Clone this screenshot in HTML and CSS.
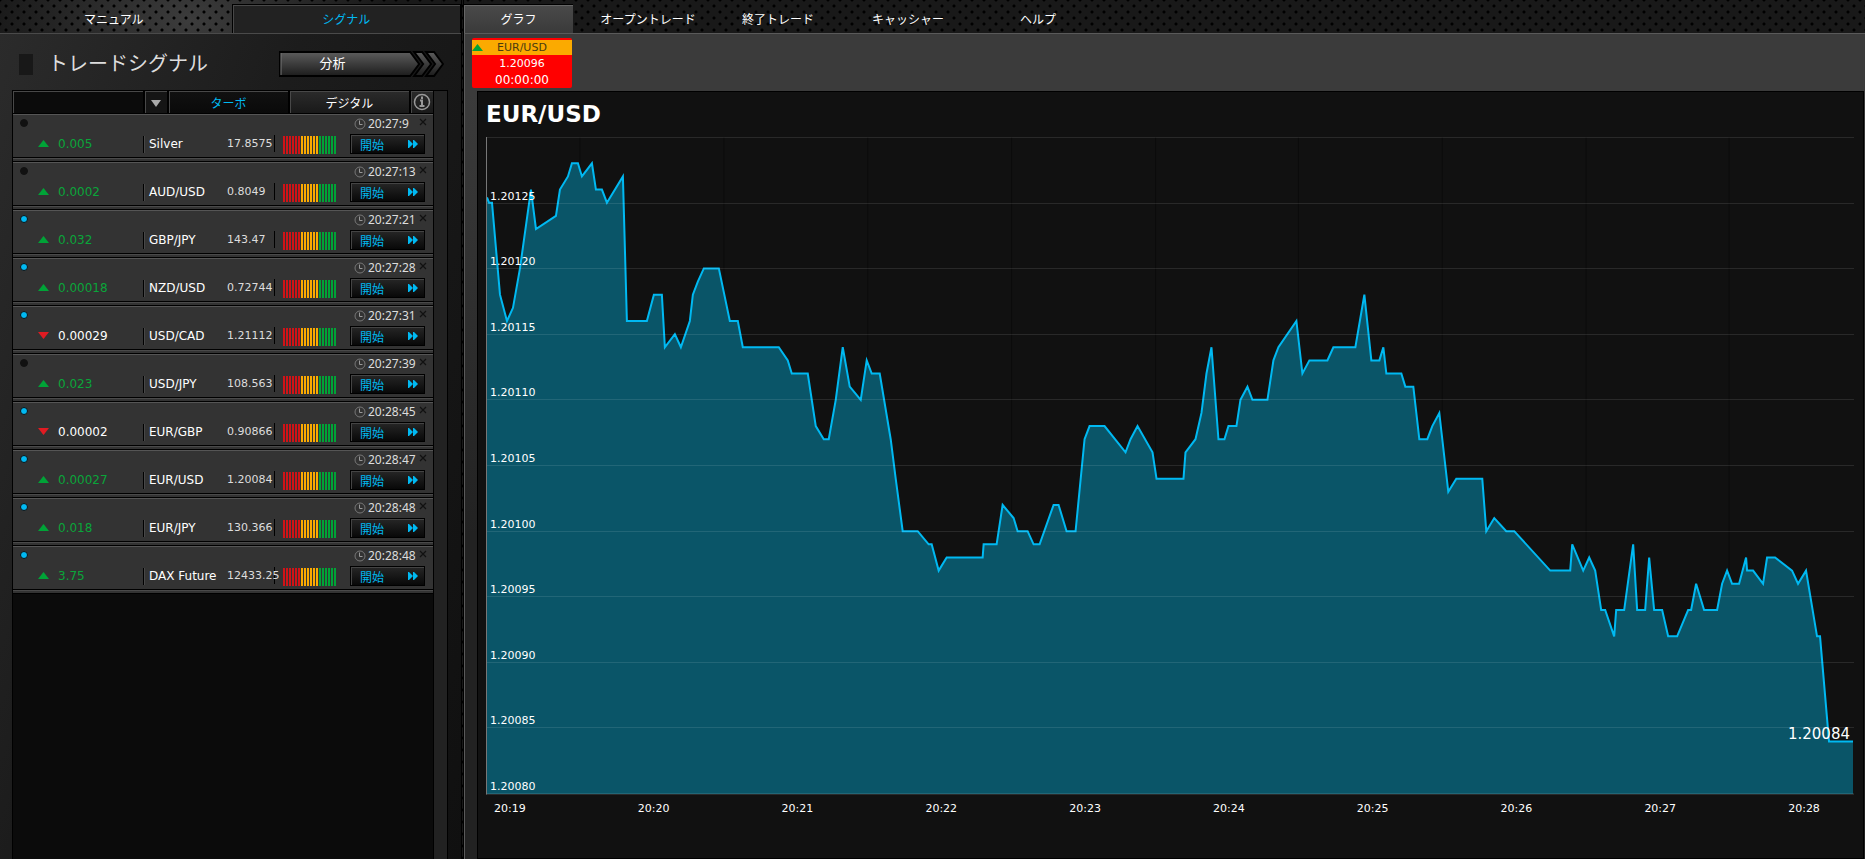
FILE: index.html
```html
<!DOCTYPE html>
<html lang="ja">
<head>
  <meta charset="UTF-8">
  <meta name="viewport" content="width=device-width, initial-scale=1.0">
  <title>トレードシグナル</title>
  <link rel="stylesheet" href="styles.css">
</head>
<body>
  <!-- shared icons -->
  <svg class="sprite" aria-hidden="true">
    <symbol id="clock" viewBox="0 0 12 12">
      <circle cx="6" cy="6" r="5" fill="none" stroke="#777"/>
      <path d="M5.500 2.500v4h3" fill="none" stroke="#999"/>
    </symbol>
    <symbol id="close" viewBox="0 0 8 8">
      <path d="M1 1l6 6M7 1l-6 6" fill="none" stroke="#111" stroke-width="1.200"/>
    </symbol>
    <symbol id="forward" viewBox="0 0 10 8">
      <path d="M0 0h1l4 4V0h1l4 4-4 4H5V4L1 8H0z" fill="#00b9f2"/>
    </symbol>
    <symbol id="up" viewBox="0 0 11 7"><path d="M0 7L5.500 0 11 7z" fill="#00a337"/></symbol>
    <symbol id="down" viewBox="0 0 11 7"><path d="M0 0h11L5.500 7z" fill="#e01b22"/></symbol>
  </svg>

  <aside class="sidebar">
    <nav class="tabs">
      <a class="tab" href="#manual">マニュアル</a>
      <a class="tab selected" href="#signals">シグナル</a>
    </nav>
    <div class="sidebar-panel">
      <div class="title-row">
        <span class="title-mark"></span>
        <h1>トレードシグナル</h1>
        <button class="analysis">
          <svg viewBox="0 0 166 26" preserveAspectRatio="none" aria-hidden="true">
            <defs>
              <linearGradient id="metal" x1="0" y1="0" x2="0" y2="1">
                <stop offset="0" stop-color="#5c5c5c"/>
                <stop offset="1" stop-color="#1c1c1c"/>
              </linearGradient>
            </defs>
            <path d="M1 1h131l9 12-9 12H1z" fill="url(#metal)" stroke="#000" stroke-width="2"/>
            <path d="M2 2v22" stroke="#777"/>
            <path d="M136 1h8l9 12-9 12h-8l9-12z" fill="url(#metal)" stroke="#000" stroke-width="2"/>
            <path d="M148 1h8l9 12-9 12h-8l9-12z" fill="url(#metal)" stroke="#000" stroke-width="2"/>
          </svg>
          <span>分析</span>
        </button>
      </div>

      <div class="signals">
        <div class="signals-body">
          <div class="filters">
            <input class="search" type="text" aria-label="銘柄">
            <button class="arrow" aria-label="銘柄を選択"><svg width="10" height="7" viewBox="0 0 10 7"><path d="M0 0h10L5 7z" fill="#aaa"/></svg></button>
            <button class="mode selected">ターボ</button>
            <button class="mode">デジタル</button>
            <button class="info" aria-label="情報">
              <svg width="18" height="18" viewBox="0 0 18 18" fill="none" stroke="#999">
                <circle cx="9" cy="9" r="7.500" stroke-width="1.500"/>
                <path d="M9 3.500v2.500M7 7.500h2v5M6.500 13h5" stroke-width="2"/>
              </svg>
            </button>
          </div>
          <ul class="signal-list">
            <li class="signal">
              <span class="dot"></span>
              <span class="time"><svg class="clock"><use href="#clock"/></svg><span>20:27:9</span></span>
              <button class="close" aria-label="閉じる"><svg><use href="#close"/></svg></button>
              <span class="change"><svg><use href="#up"/></svg>0.005</span>
              <span class="name">Silver</span><span class="price">17.8575</span>
              <span class="meter"></span>
              <button class="start">開始<svg><use href="#forward"/></svg></button>
            </li>
            <li class="signal">
              <span class="dot"></span>
              <span class="time"><svg class="clock"><use href="#clock"/></svg><span>20:27:13</span></span>
              <button class="close" aria-label="閉じる"><svg><use href="#close"/></svg></button>
              <span class="change"><svg><use href="#up"/></svg>0.0002</span>
              <span class="name">AUD/USD</span><span class="price">0.8049</span>
              <span class="meter"></span>
              <button class="start">開始<svg><use href="#forward"/></svg></button>
            </li>
            <li class="signal">
              <span class="dot on"></span>
              <span class="time"><svg class="clock"><use href="#clock"/></svg><span>20:27:21</span></span>
              <button class="close" aria-label="閉じる"><svg><use href="#close"/></svg></button>
              <span class="change"><svg><use href="#up"/></svg>0.032</span>
              <span class="name">GBP/JPY</span><span class="price">143.47</span>
              <span class="meter"></span>
              <button class="start">開始<svg><use href="#forward"/></svg></button>
            </li>
            <li class="signal">
              <span class="dot on"></span>
              <span class="time"><svg class="clock"><use href="#clock"/></svg><span>20:27:28</span></span>
              <button class="close" aria-label="閉じる"><svg><use href="#close"/></svg></button>
              <span class="change"><svg><use href="#up"/></svg>0.00018</span>
              <span class="name">NZD/USD</span><span class="price">0.72744</span>
              <span class="meter"></span>
              <button class="start">開始<svg><use href="#forward"/></svg></button>
            </li>
            <li class="signal">
              <span class="dot on"></span>
              <span class="time"><svg class="clock"><use href="#clock"/></svg><span>20:27:31</span></span>
              <button class="close" aria-label="閉じる"><svg><use href="#close"/></svg></button>
              <span class="change down"><svg><use href="#down"/></svg>0.00029</span>
              <span class="name">USD/CAD</span><span class="price">1.21112</span>
              <span class="meter"></span>
              <button class="start">開始<svg><use href="#forward"/></svg></button>
            </li>
            <li class="signal">
              <span class="dot"></span>
              <span class="time"><svg class="clock"><use href="#clock"/></svg><span>20:27:39</span></span>
              <button class="close" aria-label="閉じる"><svg><use href="#close"/></svg></button>
              <span class="change"><svg><use href="#up"/></svg>0.023</span>
              <span class="name">USD/JPY</span><span class="price">108.563</span>
              <span class="meter"></span>
              <button class="start">開始<svg><use href="#forward"/></svg></button>
            </li>
            <li class="signal">
              <span class="dot on"></span>
              <span class="time"><svg class="clock"><use href="#clock"/></svg><span>20:28:45</span></span>
              <button class="close" aria-label="閉じる"><svg><use href="#close"/></svg></button>
              <span class="change down"><svg><use href="#down"/></svg>0.00002</span>
              <span class="name">EUR/GBP</span><span class="price">0.90866</span>
              <span class="meter"></span>
              <button class="start">開始<svg><use href="#forward"/></svg></button>
            </li>
            <li class="signal">
              <span class="dot on"></span>
              <span class="time"><svg class="clock"><use href="#clock"/></svg><span>20:28:47</span></span>
              <button class="close" aria-label="閉じる"><svg><use href="#close"/></svg></button>
              <span class="change"><svg><use href="#up"/></svg>0.00027</span>
              <span class="name">EUR/USD</span><span class="price">1.20084</span>
              <span class="meter"></span>
              <button class="start">開始<svg><use href="#forward"/></svg></button>
            </li>
            <li class="signal">
              <span class="dot on"></span>
              <span class="time"><svg class="clock"><use href="#clock"/></svg><span>20:28:48</span></span>
              <button class="close" aria-label="閉じる"><svg><use href="#close"/></svg></button>
              <span class="change"><svg><use href="#up"/></svg>0.018</span>
              <span class="name">EUR/JPY</span><span class="price">130.366</span>
              <span class="meter"></span>
              <button class="start">開始<svg><use href="#forward"/></svg></button>
            </li>
            <li class="signal">
              <span class="dot on"></span>
              <span class="time"><svg class="clock"><use href="#clock"/></svg><span>20:28:48</span></span>
              <button class="close" aria-label="閉じる"><svg><use href="#close"/></svg></button>
              <span class="change"><svg><use href="#up"/></svg>3.75</span>
              <span class="name">DAX Future</span><span class="price">12433.25</span>
              <span class="meter"></span>
              <button class="start">開始<svg><use href="#forward"/></svg></button>
            </li>
          </ul>
        </div>
        <div class="track"></div>
      </div>
    </div>
  </aside>

  <main class="main">
    <nav class="tabs">
      <a class="tab selected" href="#graph">グラフ</a>
      <a class="tab" href="#open">オープントレード</a>
      <a class="tab" href="#closed">終了トレード</a>
      <a class="tab" href="#cashier">キャッシャー</a>
      <a class="tab" href="#help">ヘルプ</a>
    </nav>
    <div class="main-panel">
      <button class="ticker">
        <span class="ticker-name"><svg><use href="#up"/></svg>EUR/USD</span>
        <span class="ticker-price">1.20096</span>
        <span class="ticker-time">00:00:00</span>
      </button>

      <section class="chart">
        <h2>EUR/USD</h2>
        <div class="plot">
          <svg class="curve" viewBox="0 0 1368 50" preserveAspectRatio="none" role="img" aria-label="EUR/USD">
            <path class="vgrid" d="M93 0V50M237 0V50M381 0V50M525 0V50M669 0V50M812 0V50M956 0V50M1100 0V50M1243 0V50"/>
            <path class="area" d="M0 50V4.600L2 5 5 5 13 12 20 14 26 13 33 10 44 4 49 7 69 6 73 4 81 3 85 2 91 2 95 3 105 2 109 4 115 4 120 5 136 3 140 14 160 14 167 12 175 12 178 16 188 15 194 16 203 14 206 12 211 11 217 10 232 10 243 14 251 14 256 16 292 16 301 17 305 18 321 18 329 22 337 23 342 23 349 20 356 16 363 19 374 20 380 17 385 18 393 18 404 23 409 26 416 30 431 30 442 31 445 31 452 33 460 32 496 32 497 31 510 31 516 28 527 29 531 30 541 30 547 31 553 31 567 28 572 28 580 30 589 30 598 23 603 22 618 22 639 24 644 23 651 22 666 24 670 26 697 26 699 24 709 23 715 21 720 18 725 16 732 23 738 23 742 22 750 22 754 20 761 19 766 20 781 20 787 17 792 16 810 14 816 18 823 17 841 17 847 16 869 16 878 12 885 17 893 17 897 16 900 18 915 18 919 19 927 19 933 23 941 23 946 22 953 21 962 27 970 26 996 26 1000 30 1008 29 1020 30 1028 30 1064 33 1084 33 1086 31 1097 33 1103 32 1109 33 1115 36 1119 36 1128 38 1130 36 1138 36 1147 31 1151 36 1159 36 1163 32 1168 36 1176 36 1182 38 1191 38 1202 36 1205 36 1210 34 1218 36 1231 36 1236 34 1241 33 1246 34 1253 34 1260 32 1261 33 1267 33 1277 34 1281 32 1289 32 1306 33 1312 34 1320 33 1331 38 1334 38 1343 46 1367 46V50z"/>
            <path class="line" d="M0 4.600L2 5 5 5 13 12 20 14 26 13 33 10 44 4 49 7 69 6 73 4 81 3 85 2 91 2 95 3 105 2 109 4 115 4 120 5 136 3 140 14 160 14 167 12 175 12 178 16 188 15 194 16 203 14 206 12 211 11 217 10 232 10 243 14 251 14 256 16 292 16 301 17 305 18 321 18 329 22 337 23 342 23 349 20 356 16 363 19 374 20 380 17 385 18 393 18 404 23 409 26 416 30 431 30 442 31 445 31 452 33 460 32 496 32 497 31 510 31 516 28 527 29 531 30 541 30 547 31 553 31 567 28 572 28 580 30 589 30 598 23 603 22 618 22 639 24 644 23 651 22 666 24 670 26 697 26 699 24 709 23 715 21 720 18 725 16 732 23 738 23 742 22 750 22 754 20 761 19 766 20 781 20 787 17 792 16 810 14 816 18 823 17 841 17 847 16 869 16 878 12 885 17 893 17 897 16 900 18 915 18 919 19 927 19 933 23 941 23 946 22 953 21 962 27 970 26 996 26 1000 30 1008 29 1020 30 1028 30 1064 33 1084 33 1086 31 1097 33 1103 32 1109 33 1115 36 1119 36 1128 38 1130 36 1138 36 1147 31 1151 36 1159 36 1163 32 1168 36 1176 36 1182 38 1191 38 1202 36 1205 36 1210 34 1218 36 1231 36 1236 34 1241 33 1246 34 1253 34 1260 32 1261 33 1267 33 1277 34 1281 32 1289 32 1306 33 1312 34 1320 33 1331 38 1334 38 1343 46 1367 46"/>
          </svg>
          <div class="y-axis">
            <span></span>
            <span>1.20125</span>
            <span>1.20120</span>
            <span>1.20115</span>
            <span>1.20110</span>
            <span>1.20105</span>
            <span>1.20100</span>
            <span>1.20095</span>
            <span>1.20090</span>
            <span>1.20085</span>
            <span>1.20080</span>
          </div>
          <span class="last-price">1.20084</span>
        </div>
        <div class="x-axis">
          <span>20:19</span>
          <span>20:20</span>
          <span>20:21</span>
          <span>20:22</span>
          <span>20:23</span>
          <span>20:24</span>
          <span>20:25</span>
          <span>20:26</span>
          <span>20:27</span>
          <span>20:28</span>
        </div>
      </section>
    </div>
  </main>
</body>
</html>
```
FILE: styles.css
```css
* {
  box-sizing: border-box;
  margin: 0;
  padding: 0;
}

body {
  display: flex;
  min-height: 100vh;
  background-color: #111;
  /* perforated metal behind the tabs */
  background-image:
    radial-gradient(circle, #000 1px, transparent 2px),
    radial-gradient(circle, #000 1px, transparent 2px),
    radial-gradient(ellipse 200px 120px at 190px 20px, #3c3c3c, transparent),
    linear-gradient(#191919, #191919);
  background-size: 12px 12px, 12px 12px, auto, auto;
  background-position: 0 0, 6px 6px, 0 0, 0 0;
  color: #fff;
  font-family: "DejaVu Sans", "Noto Sans CJK JP", sans-serif;
  font-size: 12px;
}

button,
input {
  font: inherit;
  color: inherit;
  border: none;
  background: none;
}

button {
  cursor: pointer;
}

.sprite {
  display: none;
}

/* tabs */
.tabs {
  display: flex;
  height: 33px;
  padding-top: 4px;
}

.tab {
  display: flex;
  align-items: center;
  justify-content: center;
  padding-bottom: 1px;
  color: #fff;
  text-decoration: none;
}

.sidebar .tab {
  flex: 1;
}

.sidebar .tab:first-child {
  padding-right: 4px;
}

.sidebar .tab.selected {
  color: #00b9f2;
  background-color: #222;
  border: 1px solid #000;
  border-bottom: none;
  box-shadow: inset 1px 1px #484848;
}

.main .tab {
  width: 130px;
}

.main .tab.selected {
  width: 109px;
  margin-right: 10px;
  background: linear-gradient(#4a4a4a, #3a3a3a);
  border-top: 1px solid #000;
  box-shadow: inset 1px 1px #666;
}

/* left side */
.sidebar {
  display: flex;
  flex-direction: column;
  width: 464px;
  flex-shrink: 0;
  border-right: 3px double #000;
}

.sidebar-panel {
  flex: 1;
  display: flex;
  flex-direction: column;
  padding: 17px 13px 0 12px;
  border-top: 1px solid #4a4a4a;
  background: linear-gradient(110deg, #2b2b2b, #1c1c1c 40%, #101010);
}

.title-row {
  display: flex;
  align-items: center;
  height: 26px;
  margin: 0 4px 13px 7px;
}

.title-mark {
  width: 14px;
  height: 21px;
  background-color: #181818;
}

h1 {
  flex: 1;
  padding-left: 15px;
  font-size: 20px;
  font-weight: normal;
  line-height: 26px;
  color: #ddd;
}

.analysis {
  position: relative;
  width: 165px;
  height: 26px;
  padding-right: 58px;
  font-size: 13px;
  line-height: 22px;
}

.analysis svg {
  position: absolute;
  inset: 0;
  width: 100%;
  height: 100%;
}

.analysis span {
  position: relative;
}

.signals {
  flex: 1;
  display: flex;
  border: 1px solid #000;
  border-bottom: none;
}

.signals-body {
  flex: 1;
  border-right: 1px solid #000;
  background-color: #0b0b0b;
}

.track {
  width: 13px;
  background-color: #222;
}

.filters {
  display: flex;
  height: 23px;
  gap: 2px;
  border-bottom: 1px solid #000;
  background-color: #000;
}

.filters > * {
  display: flex;
  align-items: center;
  justify-content: center;
  background: linear-gradient(#2b2b2b, #191919);
  box-shadow: inset 1px 1px #484848;
}

.filters .search {
  width: 130px;
  background: #0b0b0b;
  padding: 0 6px;
}

.filters .arrow {
  width: 22px;
  padding-top: 2px;
  background: #151515;
}

.filters .mode {
  flex: 1;
}

.filters .mode.selected {
  color: #00b9f2;
  background: linear-gradient(#111, #0a0a0a);
}

.filters .info {
  width: 22px;
}

/* signal rows */
.signal-list {
  list-style: none;
}

.signal {
  display: grid;
  grid-template-columns: 45px 90px 79px 48px 75px 69px 6px 1fr;
  grid-template-rows: 19px 21px;
  height: 48px;
  border-top: 1px solid #555;
  border-bottom: 1px solid #000;
  /* dark seam and lighter strip under each row */
  background: linear-gradient(#333 42px, #000 42px, #000 43px, #4a4a4a 43px, #4a4a4a 44px, #333 44px);
}

.dot {
  width: 8px;
  height: 8px;
  margin: 4px 0 0 7px;
  border: 1px solid #111;
  border-radius: 50%;
  background-color: #111;
}

.dot.on {
  background-color: #00b9f2;
}

.time {
  grid-column: 5 / 7;
  display: flex;
  align-items: center;
  gap: 2px;
  padding-left: 79px;
  color: #ddd;
  font-family: "Noto Sans", sans-serif;
  line-height: 17px;
}

.time,
.change,
.price {
  margin-top: -2px;
}

.clock {
  width: 12px;
  height: 12px;
}

.close {
  grid-column: 7 / 9;
  display: flex;
  padding-top: 3px;
}

.close svg {
  width: 8px;
  height: 8px;
}

.change {
  grid-column: 1 / 3;
  display: flex;
  align-items: center;
  gap: 9px;
  padding-left: 25px;
  color: #0aa53a;
}

.change.down {
  color: #fff;
}

.change svg {
  width: 11px;
  height: 7px;
}

.name {
  grid-column: 3;
  align-self: center;
  margin-left: -5px;
  padding-left: 5px;
  white-space: nowrap;
  line-height: 17px;
  border-left: 1px solid #000;
  box-shadow: inset 1px 0 #484848;
}

.price {
  align-self: center;
  color: #ddd;
  font-size: 11px;
  line-height: 17px;
  border-right: 1px solid #000;
}

.meter {
  align-self: center;
  width: 54px;
  height: 18px;
  margin-left: 8px;
  background:
    repeating-linear-gradient(90deg, transparent 0 2px, #333 2px 3px),
    linear-gradient(90deg, #d01317 18px, #fbaa00 18px, #fbaa00 36px, #00a337 36px);
}

.start {
  grid-column: 6 / 8;
  display: flex;
  align-items: center;
  justify-content: space-between;
  height: 20px;
  padding: 0 6px 0 9px;
  color: #00b9f2;
  border: 1px solid #000;
  background: linear-gradient(#262626, #080808);
  box-shadow: inset 1px 1px #444;
}

.start svg {
  width: 10px;
  height: 8px;
}

/* right side */
.main {
  flex: 1;
  min-width: 0;
  display: flex;
  flex-direction: column;
}

.main-panel {
  flex: 1;
  display: flex;
  flex-direction: column;
  padding: 4px 1px 0 12px;
  border-top: 1px solid #5a5a5a;
  border-left: 1px solid #5a5a5a;
  background: linear-gradient(#3b3b3b, #3b3b3b 60px, #222 500px);
}

.ticker {
  display: flex;
  flex-direction: column;
  align-self: flex-start;
  width: 100px;
  margin: 0 0 3px -5px;
  padding-top: 2px;
  border-radius: 2px;
  background-color: #f00;
}

.ticker span {
  width: 100%;
  line-height: 15px;
}

.ticker .ticker-name {
  display: flex;
  align-items: center;
  gap: 14px;
  background-color: #fbaa00;
  color: #4a3a10;
  font-size: 11px;
}

.ticker-name svg {
  width: 11px;
  height: 7px;
}

.ticker .ticker-price {
  font-size: 11px;
  line-height: 18px;
}

.chart {
  flex: 1;
  display: flex;
  flex-direction: column;
  padding: 9px 9px 42px 8px;
  border: 1px solid #000;
  background-color: #111;
}

h2 {
  margin-bottom: 9px;
  font-size: 23px;
  line-height: 27px;
}

.plot {
  position: relative;
  flex: 1;
  border-left: 1px solid #777;
  border-bottom: 1px solid #2a2a2a;
}

.curve {
  position: absolute;
  inset: 0;
  width: 100%;
  height: 100%;
}

.curve path {
  fill: none;
  vector-effect: non-scaling-stroke;
}

.curve .vgrid {
  stroke: #0c0c0c;
}

.curve .area {
  fill: #0a5568;
}

.curve .line {
  stroke: #00b9f2;
  stroke-width: 2;
}

.y-axis {
  position: absolute;
  inset: 0;
  display: flex;
  flex-direction: column;
  font-size: 11px;
}

.y-axis span {
  flex: 1;
  display: flex;
  align-items: flex-end;
  padding-left: 3px;
  border-bottom: 1px solid rgba(255, 255, 255, 0.1);
}

.y-axis span:first-child {
  flex: 0 0 1px;
}

.last-price {
  position: absolute;
  right: 4px;
  top: 90%;
  font-size: 15px;
  line-height: 12px;
}

.x-axis {
  display: flex;
  justify-content: space-between;
  padding: 7px 34px 0 8px;
  font-size: 11px;
  line-height: 14px;
}
```
